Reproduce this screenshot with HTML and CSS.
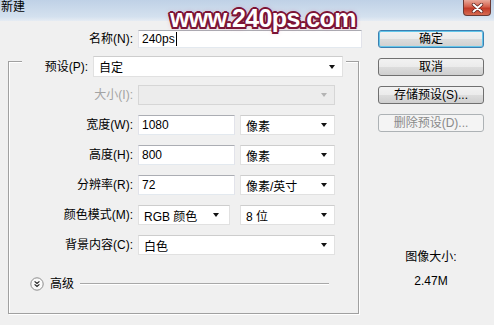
FILE: index.html
```html
<!DOCTYPE html>
<html>
<head>
<meta charset="utf-8">
<link rel="stylesheet" href="styles.css">
</head>
<body>
<div class="titlebar">
  <span class="title">新建</span>
  <div class="close">
    <svg width="13" height="10" viewBox="0 0 13 10"><path d="M2.5 1.5 L10.5 8.5 M10.5 1.5 L2.5 8.5" stroke="#5a1f1a" stroke-width="3.4" stroke-linecap="round"/><path d="M2.5 1.5 L10.5 8.5 M10.5 1.5 L2.5 8.5" stroke="#fff" stroke-width="2" stroke-linecap="round"/></svg>
  </div>
</div>
<div class="watermark">www.240ps.com</div>
<div class="main">
  <div class="left">
    <div class="name-row">
      <span class="lbl name-lbl">名称(N):</span>
      <div class="input name-input"><span class="caret">240ps</span></div>
    </div>
    <div class="group">
      <div class="preset-row">
        <span class="lbl preset-lbl">预设(P):</span>
        <div class="select preset-select"><span>自定</span><i class="arrow"></i></div>
      </div>
      <div class="rows">
        <div class="row">
          <span class="lbl dim">大小(I):</span>
          <div class="select wide off"><span></span><i class="arrow"></i></div>
        </div>
        <div class="row">
          <span class="lbl">宽度(W):</span>
          <div class="input field">1080</div>
          <div class="select unit"><span>像素</span><i class="arrow"></i></div>
        </div>
        <div class="row">
          <span class="lbl">高度(H):</span>
          <div class="input field">800</div>
          <div class="select unit"><span>像素</span><i class="arrow"></i></div>
        </div>
        <div class="row">
          <span class="lbl">分辨率(R):</span>
          <div class="input field">72</div>
          <div class="select unit"><span>像素/英寸</span><i class="arrow"></i></div>
        </div>
        <div class="row">
          <span class="lbl">颜色模式(M):</span>
          <div class="select mode"><span>RGB 颜色</span><i class="arrow"></i></div>
          <div class="select unit"><span>8 位</span><i class="arrow"></i></div>
        </div>
        <div class="row">
          <span class="lbl">背景内容(C):</span>
          <div class="select wide"><span>白色</span><i class="arrow"></i></div>
        </div>
      </div>
      <div class="advanced">
        <svg class="adv-icon" width="14" height="14" viewBox="0 0 14 14"><circle cx="7" cy="7" r="6.2" fill="#fafafa" stroke="#8c8c8c"/><path d="M4.6 4.4 L7 6.4 L9.4 4.4 M4.6 7.4 L7 9.4 L9.4 7.4" fill="none" stroke="#222" stroke-width="1.2"/></svg>
        <span class="adv-text">高级</span>
        <span class="adv-line"></span>
      </div>
    </div>
  </div>
  <div class="right">
    <div class="btn default">确定</div>
    <div class="btn">取消</div>
    <div class="btn">存储预设(S)...</div>
    <div class="btn disabled">删除预设(D)...</div>
    <div class="info">
      <div class="info-title">图像大小:</div>
      <div class="info-value">2.47M</div>
    </div>
  </div>
</div>
</body>
</html>
```

FILE: styles.css
```css
* { box-sizing: border-box; margin: 0; padding: 0; }
html, body { width: 494px; height: 325px; overflow: hidden; }
body {
  background: #f0f0f0;
  font-family: "Liberation Sans", "Noto Sans CJK SC", sans-serif;
  font-size: 12px;
  color: #000;
  position: relative;
}
.titlebar {
  height: 21px;
  background: linear-gradient(#bfd1e6, #d4e1ef 80%, #e6ecf3);
  display: flex;
  justify-content: space-between;
  align-items: flex-start;
}
.title { line-height: 14px; padding-left: 1px; }
.close {
  width: 28px;
  height: 16px;
  margin-right: 3px;
  background: linear-gradient(#e9a99a, #d4604c 45%, #c23b28 55%, #d66b52);
  border: 1px solid #6b3a35;
  border-top: none;
  border-radius: 0 0 4px 4px;
  display: flex;
  align-items: center;
  justify-content: center;
}
.watermark {
  position: absolute;
  left: 170px;
  top: 3px;
  font-family: "Liberation Sans", sans-serif;
  font-weight: bold;
  font-size: 25px;
  line-height: 30px;
  letter-spacing: -0.6px;
  color: #fff;
  text-shadow:
    2px 0 0 #7c1436, -2px 0 0 #7c1436, 0 2px 0 #7c1436, 0 -2px 0 #7c1436,
    1.5px 1.5px 0 #7c1436, -1.5px 1.5px 0 #7c1436, 1.5px -1.5px 0 #7c1436, -1.5px -1.5px 0 #7c1436,
    0 0 5px rgba(210, 90, 140, 0.8);
}
.main { display: flex; gap: 8px; padding-top: 9px; }
.left { width: 370px; }
.lbl { text-align: right; white-space: nowrap; line-height: 20px; }
.dim { color: #a3a3a3; }
.name-row { display: flex; align-items: center; gap: 5px; height: 18px; }
.name-lbl { width: 133px; }
.input {
  background: #fff;
  border: 1px solid;
  border-color: #abadb3 #e2e3ea #e3e9ef #e2e3ea;
  height: 20px;
  line-height: 18px;
  padding-left: 3px;
}
.name-input { width: 224px; height: 18px; line-height: 16px; }
.caret { border-right: 1px solid #000; padding-right: 1px; }
.group {
  margin: 13px 0 0 8px;
  width: 351px;
  border: 1px solid #a0a0a0;
  box-shadow: inset 1px 1px 0 #fff, 1px 1px 0 #fff;
  padding-bottom: 22px;
}
.preset-row {
  display: flex;
  gap: 5px;
  height: 21px;
  margin: -6px 12px 0 13px;
  background: #f0f0f0;
  align-items: center;
}
.preset-lbl { width: 66px; }
.select {
  background: #fff;
  border: 1px solid #e1e1e1;
  border-top-color: #cdcdcd;
  height: 20px;
  display: flex;
  align-items: center;
  justify-content: space-between;
  padding: 0 7px 0 5px;
  white-space: nowrap;
}
.preset-select { width: 250px; height: 21px; }
.arrow {
  display: block;
  width: 0;
  height: 0;
  border-left: 3.5px solid transparent;
  border-right: 3.5px solid transparent;
  border-top: 4px solid #111;
}
.rows { display: flex; flex-direction: column; gap: 10px; margin-top: 8px; }
.row { display: flex; align-items: center; gap: 5px; height: 20px; }
.row .lbl { width: 124px; }
.field { width: 97px; padding-left: 3px; }
.unit { width: 95px; }
.wide { width: 197px; }
.mode { width: 92px; margin-right: 5px; padding-right: 10px; }
.off { background: #ececec; border-color: #d6d6d6; }
.off .arrow { border-top-color: #b4b4b4; }
.advanced { display: flex; align-items: center; height: 14px; margin-top: 22px; }
.adv-icon { margin-left: 21px; }
.adv-text { margin-left: 6px; line-height: 14px; }
.adv-line {
  flex: 1;
  margin: 0 29px 0 6px;
  border-top: 1px solid #a8a8a8;
  border-bottom: 1px solid #fff;
}
.right { width: 106px; display: flex; flex-direction: column; gap: 10px; }
.btn {
  height: 18px;
  border: 1px solid #707070;
  border-radius: 3px;
  background: linear-gradient(#f2f2f2 0%, #ebebeb 50%, #dddddd 50%, #cfcfcf 100%);
  text-align: center;
  line-height: 16px;
  white-space: nowrap;
}
.btn.default {
  border-color: #3c7fb1;
  box-shadow: inset 0 0 0 1px #63c6ea;
}
.btn.disabled {
  border-color: #adb2b5;
  background: #f4f4f4;
  color: #8a8a8a;
}
.info { margin-top: 107px; text-align: center; line-height: 16px; }
.info-value { margin-top: 8px; }
```
